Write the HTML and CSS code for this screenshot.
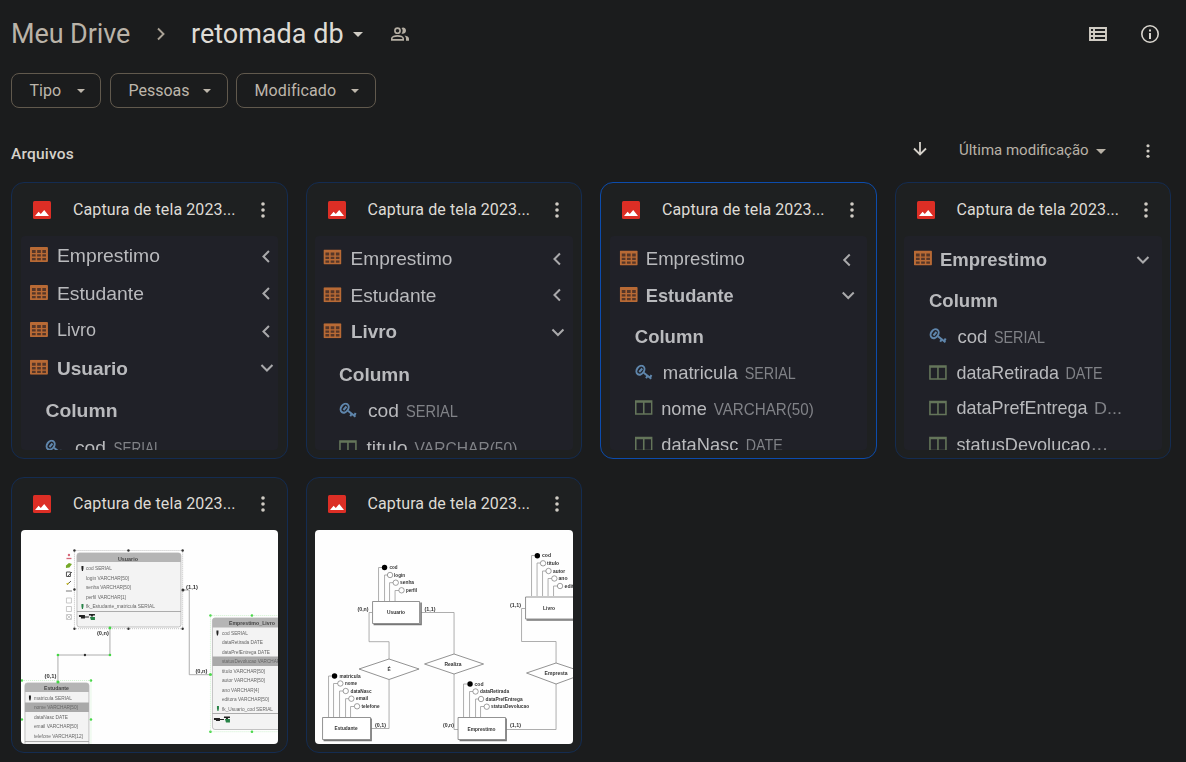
FILE: index.html
```
<!DOCTYPE html>
<html lang="pt-BR">
<head>
<meta charset="utf-8">
<title>retomada db - Meu Drive</title>
<link rel="stylesheet" href="styles.css">
</head>
<body>
<svg class="defs" width="0" height="0">
  <defs>
    <symbol id="photo" viewBox="0 0 18 18"><rect width="18" height="18" rx="1.5" fill="#dc2e25"/><path d="M2 15l3.600-4.300 2.200 2.300 3.400-4L16 15z" fill="#fff"/></symbol>
    <symbol id="more" viewBox="0 0 4 16"><circle cx="2" cy="2" r="1.800"/><circle cx="2" cy="8" r="1.800"/><circle cx="2" cy="14" r="1.800"/></symbol>
    <symbol id="caret" viewBox="0 0 10 5"><path d="M0 0h10L5 5z"/></symbol>
    <symbol id="table" viewBox="0 0 18 15"><rect width="18" height="15" rx="1" fill="#b86a35"/><path d="M2 3h3.7v3H2zM7.2 3h3.7v3H7.2zM12.4 3H16v3h-3.6zM2 7.2h3.7v2.4H2zM7.2 7.2h3.7v2.4H7.2zM12.4 7.2H16v2.4h-3.6zM2 10.9h3.7v2.3H2zM7.2 10.9h3.7v2.3H7.2zM12.4 10.9H16v2.3h-3.6z" fill="#553628"/></symbol>
    <symbol id="key" viewBox="0 0 18 16"><g fill="none" stroke="#5f86ac" stroke-width="2"><ellipse cx="5.700" cy="5.700" rx="3.600" ry="4.800" transform="rotate(35 5.700 5.700)"/><path d="M4.500 7.500l3-3.500M9 8.200l7.500 6M12.800 11.300l-1.500 2.500M15.500 12.800l1.200-2.300"/></g></symbol>
    <symbol id="col" viewBox="0 0 18 16"><path d="M1 1.5h16v13H1zM9 1.5v13M1 2.500h16" fill="none" stroke="#64755a" stroke-width="1.6"/></symbol>
    <symbol id="left" viewBox="0 0 10 14"><path d="M8 1.5L2.500 7l5.500 5.500" fill="none" stroke="#a9a9ab" stroke-width="2"/></symbol>
    <symbol id="down" viewBox="0 0 14 10"><path d="M1.500 2L7 7.500 12.500 2" fill="none" stroke="#a9a9ab" stroke-width="2"/></symbol>
  </defs>
</svg>
<main class="drive">
  <header class="top">
    <nav class="crumbs">
      <span class="parent">Meu Drive</span>
      <svg class="sep" viewBox="0 0 8 14"><path d="M1 1.500l5.500 5.500L1 12.500"/></svg>
      <span class="current">retomada db</span>
      <svg class="caret-lg"><use href="#caret"/></svg>
      <svg class="people" viewBox="0 0 18 14"><g fill="none" stroke="currentColor" stroke-width="1.6"><circle cx="6.500" cy="3.700" r="2.600"/><path d="M.8 12.900v-1.300c0-1.700 3.200-2.700 5.700-2.700s5.700 1 5.700 2.700v1.300z"/></g><path d="M10.500 1c1.300-1.200 4.500-.5 4.500 2.500s-3 3.800-4.500 3c1.500-1.500 1.500-4 0-5.500zM13.500 8.500c2.500.4 4.500 1.500 4.500 3.200v2h-3v-2c0-1.300-.6-2.300-1.500-3.200z" fill="currentColor"/></svg>
    </nav>
    <div class="tools">
      <svg class="list" viewBox="0 0 18 14"><path d="M1 1h16v12H1zM5 1v12M1 5h16M1 9h16" fill="none" stroke="currentColor" stroke-width="1.900"/></svg>
      <svg class="info" viewBox="0 0 18 18"><circle cx="9" cy="9" r="8.200" fill="none" stroke="currentColor" stroke-width="1.600"/><path d="M8 8h2v6H8zM8 4.500h2v2H8z" fill="currentColor"/></svg>
    </div>
  </header>
  <div class="chips">
    <button class="chip type"><span>Tipo</span><svg><use href="#caret"/></svg></button>
    <button class="chip persons"><span>Pessoas</span><svg><use href="#caret"/></svg></button>
    <button class="chip modified"><span>Modificado</span><svg><use href="#caret"/></svg></button>
  </div>
  <div class="bar">
    <h2>Arquivos</h2>
    <div class="sort">
      <svg class="arrow" viewBox="0 0 14 14"><path d="M7 0v12M1 6.500l6 6 6-6"/></svg>
      <span class="order">Última modificação</span>
      <svg class="caret-lg"><use href="#caret"/></svg>
      <svg class="more small"><use href="#more"/></svg>
    </div>
  </div>
  <section class="files">
    <article class="card">
      <div class="head"><svg class="photo"><use href="#photo"/></svg><span class="name">Captura de tela 2023...</span><svg class="more"><use href="#more"/></svg></div>
      <svg class="thumb dark" viewBox="21.300 236.500 257 214">
        <use href="#table" x="30" y="247.500" width="18" height="15"/><use href="#table" x="30" y="285.500" width="18" height="15"/><use href="#table" x="30" y="322.500" width="18" height="15"/><use href="#table" x="30" y="360.300" width="18" height="15"/>
        <text x="57" y="262.300" textLength="103">Emprestimo</text><text x="57" y="300" textLength="87">Estudante</text><text x="57" y="336.700" textLength="39">Livro</text>
        <text class="b" x="57" y="375" textLength="71">Usuario</text><text class="b" x="45.500" y="417.500" textLength="72">Column</text>
        <use href="#key" x="45" y="440" width="18" height="16"/><text x="75" y="454.500" textLength="31">cod</text><text class="t" x="113.500" y="454.500" textLength="48">SERIAL</text>
        <use href="#left" x="261" y="250" width="10" height="14"/><use href="#left" x="261" y="287" width="10" height="14"/><use href="#left" x="261" y="325" width="10" height="14"/><use href="#down" x="260" y="363.500" width="14" height="10"/>
      </svg>
    </article>
    <article class="card">
      <div class="head"><svg class="photo"><use href="#photo"/></svg><span class="name">Captura de tela 2023...</span><svg class="more"><use href="#more"/></svg></div>
      <svg class="thumb dark" viewBox="315.300 236.500 257 214">
        <use href="#table" x="323.500" y="250" width="18" height="15"/><use href="#table" x="323.500" y="287.700" width="18" height="15"/><use href="#table" x="323.500" y="323.700" width="18" height="15"/>
        <text x="350.500" y="265" textLength="102">Emprestimo</text><text x="350.500" y="302.300" textLength="86">Estudante</text><text class="b" x="351" y="338.300" textLength="46">Livro</text><text class="b" x="339" y="381.700" textLength="71">Column</text>
        <use href="#key" x="339" y="403" width="18" height="16"/><text x="368" y="417.300" textLength="31">cod</text><text class="t" x="406" y="417.300" textLength="52">SERIAL</text>
        <use href="#col" x="339" y="440" width="18" height="16"/><text x="366.500" y="454" textLength="41">titulo</text><text class="t" x="414.500" y="454.500" textLength="103">VARCHAR(50)</text>
        <use href="#left" x="552" y="252.500" width="10" height="14"/><use href="#left" x="552" y="288.500" width="10" height="14"/><use href="#down" x="551" y="328" width="14" height="10"/>
      </svg>
    </article>
    <article class="card selected">
      <div class="head"><svg class="photo"><use href="#photo"/></svg><span class="name">Captura de tela 2023...</span><svg class="more"><use href="#more"/></svg></div>
      <svg class="thumb dark" viewBox="610.500 236.500 257 214">
        <use href="#table" x="620" y="251" width="18" height="15"/><use href="#table" x="620" y="287.500" width="18" height="15"/>
        <text x="646" y="265.800" textLength="99">Emprestimo</text><text class="b" x="646" y="302" textLength="88">Estudante</text><text class="b" x="635" y="343" textLength="69">Column</text>
        <use href="#key" x="635" y="365" width="18" height="16"/><text x="663" y="379.500" textLength="75">matricula</text><text class="t" x="745" y="379.500" textLength="51">SERIAL</text>
        <use href="#col" x="635" y="400" width="18" height="16"/><text x="661.500" y="415" textLength="45.500">nome</text><text class="t" x="714" y="415" textLength="100">VARCHAR(50)</text>
        <use href="#col" x="635" y="436.500" width="18" height="16"/><text x="661.500" y="451.500" textLength="77">dataNasc</text><text class="t" x="746" y="451.500" textLength="37">DATE</text>
        <use href="#left" x="842" y="253.500" width="10" height="14"/><use href="#down" x="841.500" y="291" width="14" height="10"/>
      </svg>
    </article>
    <article class="card">
      <div class="head"><svg class="photo"><use href="#photo"/></svg><span class="name">Captura de tela 2023...</span><svg class="more"><use href="#more"/></svg></div>
      <svg class="thumb dark" viewBox="904.300 236.500 257 214">
        <use href="#table" x="914" y="251" width="18" height="15"/>
        <text class="b" x="940" y="266" textLength="107">Emprestimo</text><text class="b" x="929" y="307.500" textLength="69">Column</text>
        <use href="#key" x="929" y="328.500" width="18" height="16"/><text x="957.500" y="343.300" textLength="30">cod</text><text class="t" x="994" y="343.300" textLength="51">SERIAL</text>
        <use href="#col" x="929" y="365" width="18" height="16"/><text x="956.500" y="379.500" textLength="102.500">dataRetirada</text><text class="t" x="1065.500" y="379.500" textLength="37">DATE</text>
        <use href="#col" x="929" y="400.500" width="18" height="16"/><text x="956.500" y="414.800" textLength="131">dataPrefEntrega</text><text class="t" x="1094" y="414.800" textLength="28">D...</text>
        <use href="#col" x="929" y="436.500" width="18" height="16"/><text x="956.500" y="451.300" textLength="134">statusDevolucao</text><text class="t" x="1091" y="450" textLength="17">...</text>
        <use href="#down" x="1136" y="255.500" width="14" height="10"/>
      </svg>
    </article>
    <article class="card">
      <div class="head"><svg class="photo"><use href="#photo"/></svg><span class="name">Captura de tela 2023...</span><svg class="more"><use href="#more"/></svg></div>
      <svg class="thumb light model" viewBox="21.300 530 257 214">
        <path class="sel" d="M74.500 550.500H182.700V628.700H74.500z"/>
        <rect class="ent" x="77" y="553" width="104" height="74" rx="2.500"/><path class="cap" d="M77 562v-6.500q0-2.500 2.500-2.500h99q2.500 0 2.500 2.500v6.500z"/><path class="wire" d="M77 611.500h104"/>
        <path class="wire" d="M110 628v27H58v27M183 590h6.300v84.700H211"/>
        <g class="txt"><text class="h" x="118" y="560.500" textLength="20">Usuario</text><text x="86" y="570" textLength="26">cod SERIAL</text><text x="86" y="579.500" textLength="43">login VARCHAR[50]</text><text x="86" y="589" textLength="45">senha VARCHAR[50]</text><text x="86" y="598.500" textLength="40">perfil VARCHAR[1]</text><text x="86" y="607.500" textLength="69">fk_Estudante_matricula SERIAL</text><text class="n" x="97" y="634.500" textLength="12">(0,n)</text><text class="n" x="44.500" y="678" textLength="12">(0,1)</text><text class="n" x="186" y="588.500" textLength="12">(1,1)</text><text class="n" x="195.500" y="673" textLength="12">(0,n)</text></g>
        <path d="M81.500 566h2v2.500l-.5 2.500h-1l-.5-2.500zM79 615h6v1.500h4v1h-4v1h-4v-1.500h-2z" fill="#222"/><path d="M81.500 604h2v2.500l-.5 2.500h-1l-.5-2.500zM90 617h5v3h-4z" fill="#278347"/><path d="M89 614h6v1.500h-2v1h-2v-1h-2z" fill="#222"/>
        <circle cx="69" cy="555" r="1.200" fill="#d66878"/><path d="M66.500 558.500h5" stroke="#d66878" stroke-width="1.300"/><path d="M66 565.500l3-2.500 3 1-2.500 3.500-3.500.5z" fill="#75a929"/><path d="M66.500 572h4v4.500h-4zM68 576l4-4M67 585l4-4" fill="none" stroke="#555"/><path d="M66 583.500l3-1-1 2.500z" fill="#d6c933"/><path d="M66 591h6" stroke="#777"/><path d="M66.500 598h5v5h-5zM66.500 606.500h5v5h-5zM66.500 614.500h5v5h-5zM67 615l4 4M71 615l-4 4" fill="none" stroke="#bbb" stroke-width=".8"/>
        <g fill="#333"><circle cx="74.500" cy="550.500" r="1.200"/><circle cx="128.500" cy="550.500" r="1.200"/><circle cx="182.700" cy="550.500" r="1.200"/><circle cx="74.500" cy="589.500" r="1.200"/><circle cx="183" cy="590" r="1.500"/><circle cx="74.500" cy="628.700" r="1.200"/><circle cx="128.500" cy="628.700" r="1.200"/><circle cx="182.700" cy="628.700" r="1.200"/><circle cx="85" cy="655" r="1.200"/></g>
        <rect class="ent" x="25" y="683" width="64" height="70" rx="2.500"/><path class="cap" d="M25 692v-6.500q0-2.500 2.500-2.500h59q2.500 0 2.500 2.500v6.500z"/><path class="row" d="M25 702.500h64v9.500H25z"/><path class="wire" d="M25 741.500h64"/>
        <g class="txt"><text class="h" x="44" y="690" textLength="25">Estudante</text><text x="34" y="699.500" textLength="38">matricula SERIAL</text><text x="34" y="709.300" textLength="44">nome VARCHAR[50]</text><text x="34" y="718.500" textLength="34">dataNasc DATE</text><text x="34" y="728" textLength="44">email VARCHAR[50]</text><text x="34" y="737.500" textLength="49">telefone VARCHAR[12]</text></g>
        <path d="M29 695.500h2v2.500l-.5 2.500h-1L29 698z" fill="#222"/>
        <rect class="ent" x="212.500" y="618" width="80" height="111.500" rx="2.500"/><path class="cap" d="M212.500 627.500V620.500q0-2.500 2.500-2.500h70v9.500z"/><path class="row" d="M212.500 656.500H290v9.500h-77.500z"/><path class="wire" d="M212.500 713.500H290"/>
        <g class="txt"><text class="h" x="229" y="625" textLength="46">Emprestimo_Livro</text><text x="222" y="634.500" textLength="26">cod SERIAL</text><text x="222" y="644" textLength="41">dataRetirada DATE</text><text x="222" y="653.500" textLength="48">dataPrefEntrega DATE</text><text x="222" y="663" textLength="66">statusDevolucao VARCHAR[50]</text><text x="222" y="672.500" textLength="43">titulo VARCHAR[50]</text><text x="222" y="682" textLength="43">autor VARCHAR[50]</text><text x="222" y="691.500" textLength="37">ano VARCHAR[4]</text><text x="222" y="701" textLength="47">editora VARCHAR[50]</text><text x="222" y="710.500" textLength="51">fk_Usuario_cod SERIAL</text></g>
        <path d="M216.500 630.500h2v2.500l-.5 2.500h-1l-.5-2.500zM214 718h6v1h4v1h-4v1h-4v-1h-2zM224 716.500h6v1.500h-2v1h-2v-1h-2z" fill="#222"/><path d="M217 706h2v2.500l-.5 2.500h-1l-.5-2.500zM225 719h5v3.500h-4z" fill="#278347"/>
        <g fill="#43d743"><circle cx="110" cy="628" r="1.400"/><circle cx="110" cy="655" r="1.300"/><circle cx="58" cy="655" r="1.300"/><circle cx="58" cy="682" r="1.600"/><circle cx="22" cy="680.500" r="1.200"/><circle cx="91" cy="680.500" r="1.300"/><circle cx="22" cy="719.500" r="1.200"/><circle cx="91" cy="719.500" r="1.300"/><circle cx="210.500" cy="615.500" r="1.200"/><circle cx="252" cy="615.500" r="1.300"/><circle cx="210.500" cy="674.500" r="1.500"/><circle cx="210.500" cy="731.700" r="1.300"/><circle cx="252" cy="731.700" r="1.300"/></g>
        <path d="M22 680.500h69v65M210.500 731.700V615.500H278M210.500 731.700H278" fill="none" stroke="#8ce08c" stroke-width=".4" stroke-dasharray="1 1"/>
      </svg>
    </article>
    <article class="card">
      <div class="head"><svg class="photo"><use href="#photo"/></svg><span class="name">Captura de tela 2023...</span><svg class="more"><use href="#more"/></svg></div>
      <svg class="thumb light" viewBox="315.200 530 257 214">
        <path class="wire" d="M378.500 601v-33.500h6M384.500 601v-26h5M389.500 601v-18.300h5M395 601v-10.500h5.500M372 612.500h-3v29.200h20V659M389 679.500v49H371M421 612.500h33V654M454 674v55.500h4M506 729.500h50V684M525 608.500h-3.500v33H556V663M531.500 596v-40.500h4M537 596v-33h5M542.500 596v-25h5M548 596v-17.500h5M553.500 596v-10h5M328.500 717v-41h6M333.500 717v-33.500h6M339.500 717v-26h6M345.500 717v-18.300h5M350.500 717v-10.500h5M463.500 717v-33h6M469.500 717v-25.500h5M475.500 717v-18h5M480.500 717v-10.500h5"/>
        <g class="shadow"><path d="M373.500 624.500H421V602.500M323.500 740.500H371V718.500M459.500 740.500H506V718.500M526.500 620H576"/></g>
        <g class="shape"><path d="M372.500 601.500h47v22h-47zM322.500 717.500h48v22h-48zM458 717.500h47.500v22H458zM525.500 597h60v22h-60zM389 659l30 10-30 10.500L359 669zM454 654l29.500 10L454 674l-29.500-10zM556 663l30 10-30 11-29.500-11z"/></g>
        <g class="attr"><circle cx="390" cy="575" r="2.700"/><circle cx="395.700" cy="582.700" r="2.700"/><circle cx="401.500" cy="590.300" r="2.700"/><circle cx="340.300" cy="683.500" r="2.700"/><circle cx="345.700" cy="691" r="2.700"/><circle cx="351.300" cy="698.700" r="2.700"/><circle cx="357" cy="706.300" r="2.700"/><circle cx="475.500" cy="691.500" r="2.700"/><circle cx="481" cy="699" r="2.700"/><circle cx="486.700" cy="706.700" r="2.700"/><circle cx="543" cy="563.300" r="2.700"/><circle cx="548.500" cy="571" r="2.700"/><circle cx="554.300" cy="578.500" r="2.700"/><circle cx="560" cy="586" r="2.700"/></g>
        <g fill="#000"><circle cx="384.500" cy="567.500" r="2.700"/><circle cx="334.500" cy="676" r="2.700"/><circle cx="470" cy="684" r="2.700"/><circle cx="537.300" cy="555.700" r="2.700"/></g>
        <g class="txt er"><text x="389.500" y="569" textLength="8">cod</text><text x="394" y="576.800" textLength="11">login</text><text x="400" y="584.300" textLength="14">senha</text><text x="406" y="592" textLength="11">perfil</text><text x="387" y="614" textLength="18">Usuario</text><text x="357.500" y="610.500" textLength="11">(0,n)</text><text x="424.500" y="610.500" textLength="11">(1,1)</text><text x="387.500" y="670.500">É</text>
        <text x="339.500" y="677.500" textLength="21">matricula</text><text x="345" y="685.200" textLength="12">nome</text><text x="350.500" y="692.700" textLength="21">dataNasc</text><text x="356" y="700.300" textLength="12">email</text><text x="361.500" y="708" textLength="18">telefone</text><text x="334.500" y="730" textLength="23">Estudante</text><text x="375" y="726.500" textLength="11">(0,1)</text>
        <text x="444.500" y="665.800" textLength="17">Realiza</text><text x="474.500" y="685.500" textLength="9">cod</text><text x="480" y="693.200" textLength="29">dataRetirada</text><text x="485.500" y="700.700" textLength="37">dataPrefEntrega</text><text x="491" y="708.300" textLength="38">statusDevolucao</text><text x="467.500" y="730.500" textLength="28">Emprestimo</text><text x="443" y="727" textLength="11">(0,n)</text><text x="510" y="727" textLength="11">(1,1)</text>
        <text x="542" y="557.200" textLength="9">cod</text><text x="547" y="565" textLength="12">titulo</text><text x="553" y="572.500" textLength="12">autor</text><text x="558.500" y="580" textLength="9">ano</text><text x="564.500" y="588" textLength="17">editora</text><text x="543" y="610" textLength="12">Livro</text><text x="510" y="606.500" textLength="11">(1,1)</text><text x="544.500" y="675" textLength="23">Empresta</text></g>
      </svg>
    </article>
  </section>
</main>
<script src="labels.js"></script>
</body>
</html>
```
FILE: labels.js
```
// Stretch the glyphs of thumbnail labels along with their spacing.
document.querySelectorAll('.thumb text[textLength]').forEach(function (label) {
  label.setAttribute('lengthAdjust', 'spacingAndGlyphs');
});
```
FILE: styles.css
```
* { box-sizing: border-box; }
body {
  margin: 0;
  height: 762px;
  overflow: hidden;
  background: #1b1c1d;
  color: #c8c3ba;
  font-family: Roboto, "Liberation Sans", sans-serif;
}
svg { display: block; flex: none; fill: currentColor; }
.defs { position: absolute; }
.drive { padding: 0 15px 0 11px; }
.top { display: flex; justify-content: space-between; height: 68px; padding-right: 12px; }
.crumbs, .tools { display: flex; align-items: center; }
.parent, .current { font-size: 27px; line-height: 34px; white-space: nowrap; }
.parent { width: 119px; color: #bab3a8; letter-spacing: -.1px; }
.current { width: 152px; color: #dedbd5; }
.sep { width: 8px; height: 14px; margin: 0 26px 0 27px; fill: none; stroke: #aaa296; stroke-width: 1.9; }
.caret-lg { width: 10px; height: 5px; color: #d0ccc4; }
.crumbs .caret-lg { margin-left: 10px; }
.people { width: 18px; height: 14px; margin-left: 28px; color: #b5aea3; }
.list { width: 18px; height: 14px; color: #d0ccc4; }
.info { width: 18px; height: 18px; margin-left: 34px; color: #d8d4cd; }
.chips { display: flex; gap: 9px; margin-top: 5px; }
.chip {
  display: flex; align-items: center; justify-content: space-between;
  height: 35px; padding: 0 16px 0 17.5px;
  border: 1px solid #61594d; border-radius: 8px;
  background: none; color: #bdb6ab;
  font: 400 16px Roboto, sans-serif;
}
.chip svg { width: 8px; height: 4px; }
.type { width: 90px; padding-right: 15px; }
.persons { width: 118px; }
.modified { width: 140px; margin-left: -1px; letter-spacing: .1px; }
.bar { display: flex; justify-content: space-between; height: 74px; padding: 24px 21px 0 0; }
.bar h2 { margin: 10px 0 0; font-size: 15.500px; line-height: 24px; font-weight: 500; color: #d5d1ca; letter-spacing: .2px; }
.sort { display: flex; align-items: center; height: 36px; }
.arrow { width: 14px; height: 14px; margin-bottom: 2px; fill: none; stroke: #d5d1ca; stroke-width: 1.8; }
.order { width: 130px; margin-left: 32px; color: #b8b1a6; font-size: 15px; white-space: nowrap; }
.sort .caret-lg { margin: 3px 0 0 7px; color: #b8b1a6; }
.more { width: 4px; height: 16px; color: #d0ccc4; }
.sort .more { height: 14px; margin: 2px 0 0 40px; }
.files { display: grid; grid-template-columns: repeat(4, 1fr); gap: 18px; }
.card { height: 276.5px; padding: 0 8.500px; border: 1px solid #142c51; border-radius: 13px; background: #1e2021; }
.card.selected { border-color: #0c4cac; }
.head { display: flex; align-items: center; height: 52.500px; padding: 0 13.300px 0 12.700px; }
.photo { width: 18px; height: 18px; margin-top: 1px; }
.name { width: 164px; margin: 0 0 0 21.800px; color: #dedbd5; font-size: 16px; font-weight: 400; letter-spacing: .1px; white-space: nowrap; }
.head .more { margin: 1px 0 0 auto; }
.thumb { width: 100%; height: 214px; border-radius: 4px; }
.dark { background: #202128; }
.dark text { fill: #b9babd; font: 18.500px "Liberation Sans", Arial, sans-serif; }
.dark .b { font-weight: 700; }
.dark .t { fill: #808287; font-size: 16.500px; }
.dark > * { filter: blur(.35px); }
.light { background: #fefefe; }
.light > * { filter: blur(.35px); }
.txt text { fill: #666; font: 4.800px "Liberation Sans", Arial, sans-serif; }
.txt .h { font-weight: 700; fill: #444; }
.txt .n, .er text { fill: #333; font-weight: 700; }
.wire { fill: none; stroke: #999; stroke-width: .8; }
.sel { fill: none; stroke: #999; stroke-width: .6; stroke-dasharray: 1 1; }
.ent { fill: #f3f3f3; stroke: #aaa; stroke-width: .7; }
.cap { fill: #b5b5b5; }
.row { fill: #a9a9a9; }
.shape { fill: #fff; stroke: #777; stroke-width: .8; }
.shadow { fill: none; stroke: #777; stroke-width: 1.600; }
.attr { fill: #fff; stroke: #777; stroke-width: .7; }
```
